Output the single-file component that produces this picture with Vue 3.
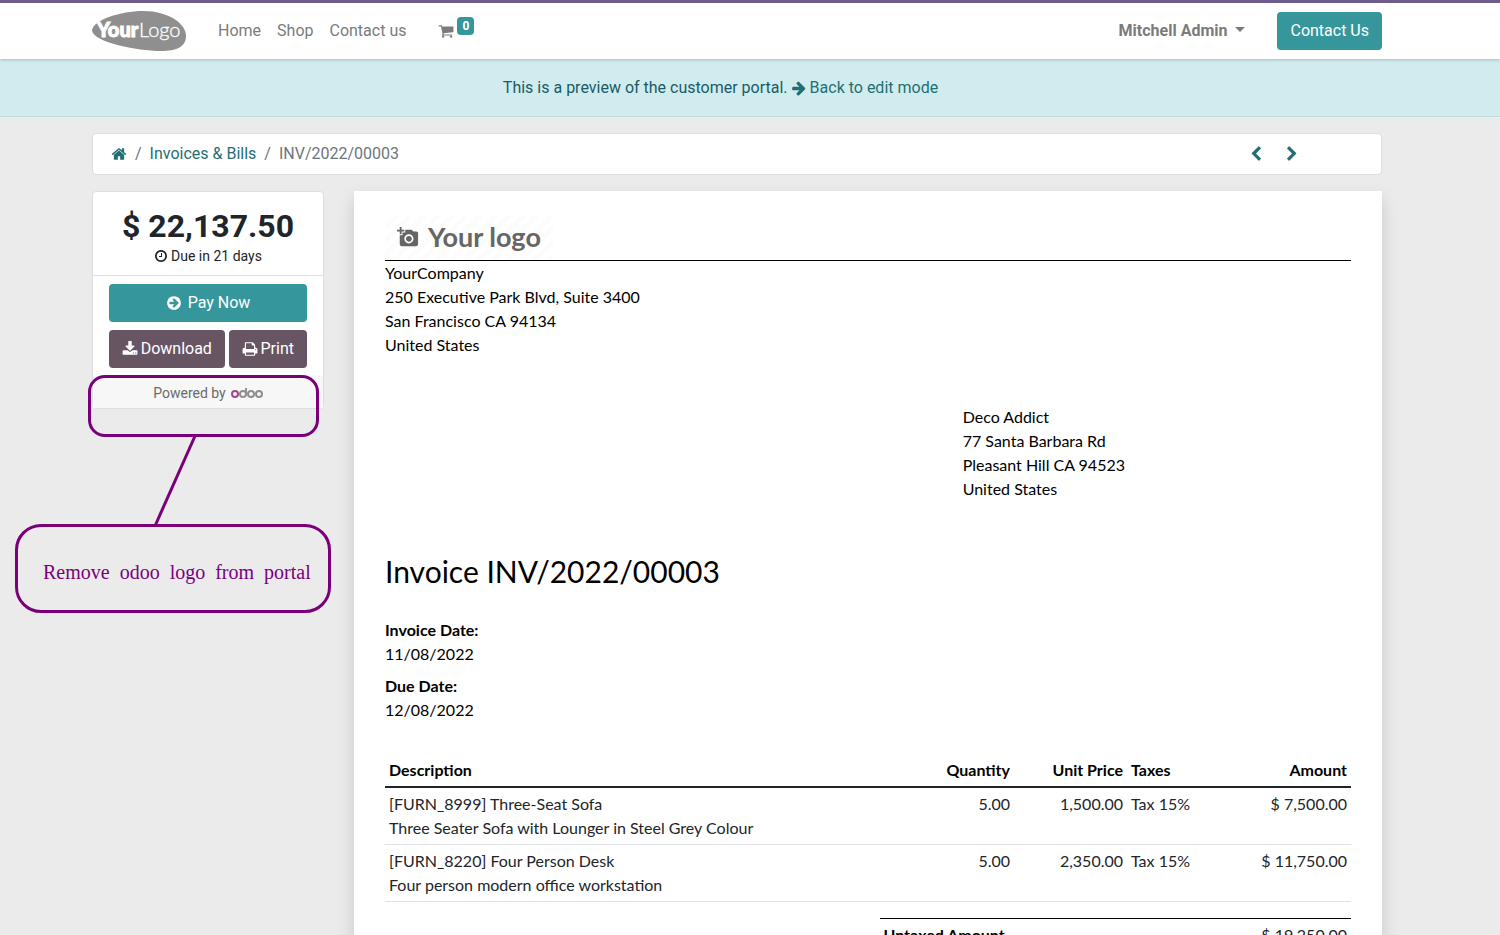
<script setup>
const menu = ['Home', 'Shop', 'Contact us']
const company = ['YourCompany', '250 Executive Park Blvd, Suite 3400', 'San Francisco CA 94134', 'United States']
const customer = ['Deco Addict', '77 Santa Barbara Rd', 'Pleasant Hill CA 94523', 'United States']
const dates = [
  { label: 'Invoice Date:', value: '11/08/2022' },
  { label: 'Due Date:', value: '12/08/2022' }
]
const lines = [
  { name: '[FURN_8999] Three-Seat Sofa', detail: 'Three Seater Sofa with Lounger in Steel Grey Colour', qty: '5.00', price: '1,500.00', tax: 'Tax 15%', amount: '$ 7,500.00' },
  { name: '[FURN_8220] Four Person Desk', detail: 'Four person modern office workstation', qty: '5.00', price: '2,350.00', tax: 'Tax 15%', amount: '$ 11,750.00' }
]
const note = 'Remove  odoo  logo  from  portal'

const icons = {
  home: 'M1472 992v480q0 26-19 45t-45 19h-384v-384h-256v384h-384q-26 0-45-19t-19-45v-480q0-1 .5-3t.5-3l575-474 575 474q1 2 1 6zm223-69l-62 74q-8 9-21 11h-3q-13 0-21-7l-692-577-692 577q-12 8-24 7-13-2-21-11l-62-74q-8-10-7-23.5t11-21.5l719-599q32-26 76-26t76 26l244 204v-195q0-14 9-23t23-9h192q14 0 23 9t9 23v408l219 182q10 8 11 21.5t-7 23.5z',
  cart: 'M704 1536q0 52-38 90t-90 38-90-38-38-90 38-90 90-38 90 38 38 90zm896 0q0 52-38 90t-90 38-90-38-38-90 38-90 90-38 90 38 38 90zm128-1088v512q0 24-16.5 42.5t-40.5 21.5l-1044 122q13 60 13 70 0 16-24 64h920q26 0 45 19t19 45-19 45-45 19h-1024q-26 0-45-19t-19-45q0-11 8-31.5t16-36 21.5-40 15.5-29.5l-177-823h-204q-26 0-45-19t-19-45 19-45 45-19h256q16 0 28.5 6.5t19.5 15.5 13 24.5 8 26 5.5 29.5 4.5 26h1201q26 0 45 19t19 45z',
  arrow: 'M1600 960q0 54-37 91l-651 651q-39 37-91 37-51 0-90-37l-75-75q-38-38-38-91t38-91l293-293h-704q-52 0-84.5-37.5t-32.5-90.5v-128q0-53 32.5-90.5t84.5-37.5h704l-293-294q-38-36-38-90t38-90l75-75q38-38 90-38 53 0 91 38l651 651q37 35 37 90z',
  clock: 'M1024 544v448q0 14-9 23t-23 9h-320q-14 0-23-9t-9-23v-64q0-14 9-23t23-9h224v-352q0-14 9-23t23-9h64q14 0 23 9t9 23zm416 352q0-148-73-273t-198-198-273-73-273 73-198 198-73 273 73 273 198 198 273 73 273-73 198-198 73-273zm224 0q0 209-103 385.5t-279.5 279.5-385.5 103-385.5-103-279.5-279.5-103-385.5 103-385.5 279.5-279.5 385.5-103 385.5 103 279.5 279.5 103 385.5z',
  circleArrow: 'M1413 896q0-27-18-45l-91-91-362-362q-18-18-45-18t-45 18l-91 91q-18 18-18 45t18 45l189 189h-502q-26 0-45 19t-19 45v128q0 26 19 45t45 19h502l-189 189q-19 19-19 45t19 45l91 91q18 18 45 18t45-18l362-362 91-91q18-18 18-45zm251 0q0 209-103 385.5t-279.5 279.5-385.5 103-385.5-103-279.5-279.5-103-385.5 103-385.5 279.5-279.5 385.5-103 385.5 103 279.5 279.5 103 385.5z',
  download: 'M1344 1344q0-26-19-45t-45-19-45 19-19 45 19 45 45 19 45-19 19-45zm256 0q0-26-19-45t-45-19-45 19-19 45 19 45 45 19 45-19 19-45zm128-224v320q0 40-28 68t-68 28h-1472q-40 0-68-28t-28-68v-320q0-40 28-68t68-28h465l135 136q58 56 136 56t136-56l136-136h464q40 0 68 28t28 68zm-325-569q17 41-14 70l-448 448q-18 19-45 19t-45-19l-448-448q-31-29-14-70 17-39 59-39h256v-448q0-26 19-45t45-19h256q26 0 45 19t19 45v448h256q42 0 59 39z',
  print: 'M448 1536h896v-256h-896v256zm0-640h896v-384h-160q-40 0-68-28t-28-68v-160h-640v640zm1152 64q0-26-19-45t-45-19-45 19-19 45 19 45 45 19 45-19 19-45zm128 0v416q0 13-9.5 22.5t-22.5 9.5h-224v160q0 40-28 68t-68 28h-960q-40 0-68-28t-28-68v-160h-224q-13 0-22.5-9.5t-9.5-22.5v-416q0-79 56.5-135.5t135.5-56.5h64v-544q0-40 28-68t68-28h672q40 0 88 20t76 48l152 152q28 28 48 76t20 88v256h64q79 0 135.5 56.5t56.5 135.5z',
  prev: 'M1427 301l-531 531 531 531q19 19 19 45t-19 45l-166 166q-19 19-45 19t-45-19l-742-742q-19-19-19-45t19-45l742-742q19-19 45-19t45 19l166 166q19 19 19 45t-19 45z',
  next: 'M1363 877l-742 742q-19 19-45 19t-45-19l-166-166q-19-19-19-45t19-45l531-531-531-531q-19-19-19-45t19-45l166-166q19-19 45-19t45 19l742 742q19 19 19 45t-19 45z'
}
</script>

<template>
  <div class="page">
    <header class="navbar">
      <a href="#" class="brand" aria-label="Your Logo">
        <svg width="94" height="40" viewBox="0 0 94 40">
          <path class="blob" d="M0 19C2 9 28 0 51 0C77 0 94 13 94 25C94 36 84 40 69 40C45 40 0 31 0 19Z" />
          <text x="5" y="26" class="brand-bold">Your</text>
          <text x="47" y="26" class="brand-light">Logo</text>
        </svg>
      </a>
      <nav class="menu">
        <a v-for="m in menu" :key="m" href="#">{{ m }}</a>
      </nav>
      <a href="#" class="cart" aria-label="Cart">
        <svg class="icon" viewBox="0 0 1792 1792"><path :d="icons.cart" /></svg>
        <span class="badge">0</span>
      </a>
      <button type="button" class="user">Mitchell Admin<span class="caret"></span></button>
      <a href="#" class="btn teal">Contact Us</a>
    </header>

    <div class="banner">
      <span>This is a preview of the customer portal.</span>
      <a href="#"><svg class="icon" viewBox="0 0 1792 1792"><path :d="icons.arrow" /></svg>Back to edit mode</a>
    </div>

    <main class="content">
      <div class="crumbs">
        <ol>
          <li><a href="#" aria-label="Home"><svg class="icon" viewBox="0 0 1792 1792"><path :d="icons.home" /></svg></a></li>
          <li><a href="#">Invoices &amp; Bills</a></li>
          <li>INV/2022/00003</li>
        </ol>
        <div class="pager">
          <a href="#" aria-label="Previous"><svg class="icon" viewBox="0 0 1792 1792"><path :d="icons.prev" /></svg></a>
          <a href="#" aria-label="Next"><svg class="icon" viewBox="0 0 1792 1792"><path :d="icons.next" /></svg></a>
        </div>
      </div>

      <div class="columns">
        <aside class="card">
          <div class="summary">
            <h2>$ 22,137.50</h2>
            <p><svg class="icon small" viewBox="0 0 1792 1792"><path :d="icons.clock" /></svg>Due in 21 days</p>
          </div>
          <div class="actions">
            <button type="button" class="btn teal wide"><svg class="icon" viewBox="0 0 1792 1792"><path :d="icons.circleArrow" /></svg>Pay Now</button>
            <div class="pair">
              <button type="button" class="btn plum grow"><svg class="icon" viewBox="0 0 1792 1792"><path :d="icons.download" /></svg>Download</button>
              <button type="button" class="btn plum"><svg class="icon" viewBox="0 0 1792 1792"><path :d="icons.print" /></svg>Print</button>
            </div>
          </div>
          <div class="powered">
            <span>Powered by</span>
            <a href="#" aria-label="odoo">
              <svg width="32" height="12" viewBox="0 0 32 12" fill="none" stroke-width="2">
                <circle cx="4" cy="7" r="3" stroke="#a24689" />
                <g stroke="#8f8f8f">
                  <circle cx="12" cy="7" r="3" />
                  <path d="M15 7V1" />
                  <circle cx="20" cy="7" r="3" />
                  <circle cx="28" cy="7" r="3" />
                </g>
              </svg>
            </a>
          </div>
        </aside>

        <article class="paper">
          <div class="letterhead">
            <svg class="camera" viewBox="0 0 24 24"><path d="M3 4V1h2v3h3v2H5v3H3V6H0V4h3zm3 6V7h3V4h7l1.83 2H21c1.1 0 2 .9 2 2v12c0 1.1-.9 2-2 2H5c-1.1 0-2-.9-2-2V10h3zm7 9c2.76 0 5-2.24 5-5s-2.24-5-5-5-5 2.24-5 5 2.24 5 5 5zm-3.2-5c0 1.77 1.43 3.2 3.2 3.2s3.2-1.43 3.2-3.2-1.43-3.2-3.2-3.2-3.2 1.43-3.2 3.2z" /></svg>
            <span>Your logo</span>
          </div>
          <address class="company">
            <div v-for="l in company" :key="l">{{ l }}</div>
          </address>
          <address class="customer">
            <div v-for="l in customer" :key="l">{{ l }}</div>
          </address>
          <h1>Invoice INV/2022/00003</h1>
          <dl>
            <div v-for="d in dates" :key="d.label">
              <dt>{{ d.label }}</dt>
              <dd>{{ d.value }}</dd>
            </div>
          </dl>
          <table class="lines">
            <colgroup>
              <col /><col class="c-qty" /><col class="c-price" /><col class="c-tax" /><col class="c-amount" />
            </colgroup>
            <thead>
              <tr><th>Description</th><th class="num">Quantity</th><th class="num">Unit Price</th><th>Taxes</th><th class="num">Amount</th></tr>
            </thead>
            <tbody>
              <tr v-for="l in lines" :key="l.name">
                <td>{{ l.name }}<br />{{ l.detail }}</td>
                <td class="num">{{ l.qty }}</td>
                <td class="num">{{ l.price }}</td>
                <td>{{ l.tax }}</td>
                <td class="num">{{ l.amount }}</td>
              </tr>
            </tbody>
          </table>
          <table class="totals">
            <tbody>
              <tr><th scope="row">Untaxed Amount</th><td class="num">$ 19,250.00</td></tr>
            </tbody>
          </table>
        </article>
      </div>
    </main>

    <div class="highlight"></div>
    <svg class="connector" width="46" height="92" viewBox="0 0 46 92"><path d="M43 1L3 91" /></svg>
    <div class="callout">{{ note }}</div>
  </div>
</template>

<style>
body {
  background: #ebebeb;
}
</style>

<style scoped>
* {
  box-sizing: border-box;
}
.page {
  position: relative;
  height: 100vh;
  overflow-x: hidden;
  overflow-y: auto;
  scrollbar-width: none;
  background: #ebebeb;
  color: #212529;
  font: 16px/24px Roboto, "Liberation Sans", sans-serif;
}
a {
  color: #1f6f73;
  text-decoration: none;
}
.icon {
  width: 16px;
  height: 16px;
  fill: currentColor;
  flex: none;
}
.icon.small {
  width: 14px;
  height: 14px;
}
.navbar {
  position: relative;
  display: flex;
  align-items: center;
  height: 59px;
  padding: 0 118px 0 92px;
  border-top: 3px solid #6c5b8c;
  background: #fff;
  box-shadow: 0 1px 3px rgba(0, 0, 0, 0.2);
}
.brand {
  display: flex;
  margin-right: 24px;
}
.blob {
  fill: #8f8f8f;
}
.brand-bold,
.brand-light {
  fill: #fff;
  font-family: Lato, sans-serif;
  font-size: 20px;
}
.brand-bold {
  font-weight: 900;
  stroke: #fff;
  stroke-width: 1;
}
.brand-light {
  font-weight: 300;
  stroke: #fff;
  stroke-width: 0.3;
}
.menu {
  display: flex;
}
.menu a {
  padding: 0 8px;
  color: #7b7b7b;
}
.cart {
  display: flex;
  align-items: center;
  gap: 3px;
  margin-left: 24px;
  color: #7b7b7b;
}
.badge {
  margin-bottom: 10px;
  padding: 0 5px;
  border-radius: 4px;
  background: #35979c;
  color: #fff;
  font-size: 12px;
  font-weight: 700;
  line-height: 18px;
}
.user {
  display: flex;
  align-items: center;
  gap: 8px;
  margin-left: auto;
  margin-right: 32px;
  padding: 0;
  border: 0;
  background: none;
  color: #7b7b7b;
  font: inherit;
  font-weight: 700;
}
.caret {
  margin-bottom: 3px;
  border: 5px solid transparent;
  border-top-color: currentColor;
  border-bottom: 0;
}
.btn {
  display: flex;
  align-items: center;
  justify-content: center;
  gap: 3px;
  height: 38px;
  padding: 0 13px;
  border: 0;
  border-radius: 4px;
  color: #fff;
  font: inherit;
}
.teal {
  background: #35979c;
}
.plum {
  background: #685563;
}
.wide {
  width: 100%;
  gap: 6px;
}
.grow {
  flex: 1;
  padding: 0;
}
.banner {
  display: flex;
  justify-content: center;
  gap: 3px;
  padding: 17px 59px 16px 0;
  border-bottom: 1px solid #bcdcdf;
  background: #d1ecef;
  color: #1b5a66;
}
.banner a {
  display: flex;
  align-items: center;
  gap: 3px;
}
.content {
  padding: 16px 118px 0 92px;
}
.crumbs {
  display: flex;
  align-items: center;
  justify-content: space-between;
  height: 42px;
  padding: 0 81px 0 18px;
  border: 1px solid #dedede;
  border-radius: 4px;
  background: #fff;
}
.crumbs ol {
  display: flex;
  margin: 0;
  padding: 0;
  list-style: none;
  color: #6c757d;
}
.crumbs li {
  display: flex;
  align-items: center;
}
.crumbs li + li::before {
  content: "/";
  padding: 0 8px;
}
.crumbs li a {
  display: flex;
}
.pager {
  display: flex;
  gap: 20px;
}
.pager a {
  display: flex;
}
.columns {
  display: grid;
  grid-template-columns: 232px minmax(0, 1fr);
  align-items: start;
  gap: 30px;
  margin-top: 16px;
}
.card {
  border: 1px solid #dedede;
  border-radius: 4px;
  background: #fff;
}
.summary {
  padding: 16px 16px 8px;
  border-bottom: 1px solid #dedede;
  text-align: center;
}
.summary h2 {
  margin: 0;
  font-size: 32px;
  line-height: 37px;
}
.summary p {
  display: flex;
  align-items: center;
  justify-content: center;
  gap: 3px;
  margin: 0;
  font-size: 14px;
  line-height: 22px;
}
.actions {
  display: grid;
  gap: 8px;
  padding: 8px 16px;
}
.pair {
  display: flex;
  gap: 4px;
}
.powered {
  display: flex;
  align-items: center;
  justify-content: center;
  gap: 5px;
  height: 32px;
  padding-top: 2px;
  background: #f7f7f7;
  color: #6b6b6b;
  font-size: 14px;
}
.powered a {
  display: flex;
}
.paper {
  min-height: 1200px;
  padding: 25px 31px;
  background: #fff;
  box-shadow: 0 8px 16px rgba(0, 0, 0, 0.15);
  color: #000;
  font-family: Lato, "Liberation Sans", sans-serif;
}
.letterhead {
  display: flex;
  align-items: center;
  gap: 9px;
  width: 168px;
  height: 44px;
  padding: 0 0 2px 12px;
  background: repeating-linear-gradient(135deg, #fff 0 5px, #fcfcfc 5px 10px);
  color: #666;
  font-size: 27px;
  font-weight: 700;
  white-space: nowrap;
}
.camera {
  width: 22px;
  height: 22px;
  fill: currentColor;
}
address {
  font-style: normal;
}
.company {
  border-top: 1px solid #000;
}
.customer {
  margin: 48px 0 0 59.8%;
}
h1 {
  margin: 51px 0 28px;
  font-size: 30px;
  font-weight: 400;
  line-height: 38px;
}
dl {
  display: grid;
  gap: 8px;
  margin: 0 0 32px;
}
dt,
th {
  font-weight: 700;
}
dd {
  margin: 0;
}
table {
  border-spacing: 0;
  table-layout: fixed;
  width: 100%;
}
th,
td {
  padding: 4px;
  text-align: left;
  vertical-align: top;
}
td {
  color: #212529;
}
.lines th {
  border-bottom: 2px solid #212529;
}
.lines td {
  border-bottom: 1px solid #dee2e6;
}
th.num,
td.num {
  text-align: right;
}
.c-qty {
  width: 116px;
}
.c-price {
  width: 113px;
}
.c-tax {
  width: 97px;
}
.c-amount {
  width: 127px;
}
.totals {
  width: 48.8%;
  margin: 16px 0 0 auto;
  border-top: 1px solid #000;
}
.highlight,
.callout,
.connector {
  position: absolute;
}
.highlight {
  top: 375px;
  left: 88px;
  width: 231px;
  height: 62px;
  border: 3px solid #7a007a;
  border-radius: 17px;
}
.connector {
  top: 435px;
  left: 152px;
  fill: none;
  stroke: #7a007a;
  stroke-width: 3;
}
.callout {
  top: 524px;
  left: 15px;
  width: 316px;
  height: 89px;
  padding: 33px 0 0 25px;
  border: 3px solid #7a007a;
  border-radius: 26px;
  color: #7a007a;
  font: 20px/24px "Liberation Serif", serif;
  white-space: pre;
}
</style>
